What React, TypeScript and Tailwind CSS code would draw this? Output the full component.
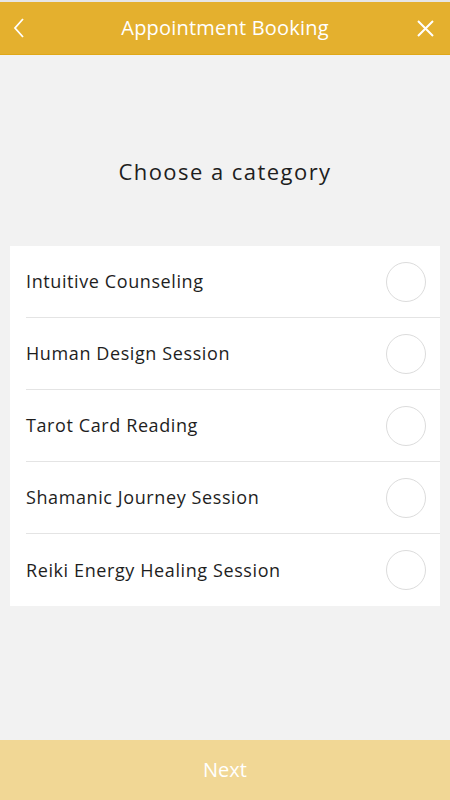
import React, { useState } from 'react'

const categories = [
  'Intuitive Counseling',
  'Human Design Session',
  'Tarot Card Reading',
  'Shamanic Journey Session',
  'Reiki Energy Healing Session',
]

export default function App() {
  const [selected, setSelected] = useState<number | null>(null)

  return (
    <div className="flex h-[800px] w-full flex-col bg-[#f2f2f2] font-['Open_Sans',sans-serif]">
      <div className="h-[2px] bg-[#e6e6e6]" />
      <header className="grid h-[53px] grid-cols-[40px_1fr_40px] items-center border-b border-[#e0a818] bg-[#e4b02e] px-[10px] text-white">
        <button type="button" className="flex h-8 items-center pl-[2px]">
          <svg width="14" height="22" viewBox="0 0 14 22" fill="none" stroke="white" strokeWidth="1.8">
            <path d="M11 2 L3 11 L11 20" />
          </svg>
        </button>
        <h1 className="text-center text-[20px] font-normal tracking-[0.2px]">Appointment Booking</h1>
        <button type="button" className="flex h-8 items-center justify-end pr-[6px]">
          <svg width="17" height="17" viewBox="0 0 17 17" fill="none" stroke="white" strokeWidth="2">
            <path d="M1 1 L16 16 M16 1 L1 16" />
          </svg>
        </button>
      </header>

      <main className="flex grow flex-col">
        <h2 className="mt-[100px] text-center text-[22px] tracking-[1.45px] text-[#1e1e1e]">
          Choose a category
        </h2>
        <ul className="mx-[10px] mt-[58px] bg-white">
          {categories.map((c, i) => (
            <li
              key={c}
              onClick={() => setSelected(i)}
              className="ml-4 flex h-[72px] cursor-pointer items-center justify-between border-b border-[#e4e4e4] last:border-b-0"
            >
              <span className="text-[18px] tracking-[0.6px] text-[#1e1e1e]">{c}</span>
              <span
                className={`mr-[14px] h-[40px] w-[40px] rounded-full border ${
                  selected === i ? 'border-[#e4b02e] bg-[#e4b02e]' : 'border-[#dcdcdc]'
                }`}
              />
            </li>
          ))}
        </ul>
      </main>

      <button type="button" className="h-[60px] w-full bg-[#f1d795] text-[20px] text-white">
        Next
      </button>
    </div>
  )
}
